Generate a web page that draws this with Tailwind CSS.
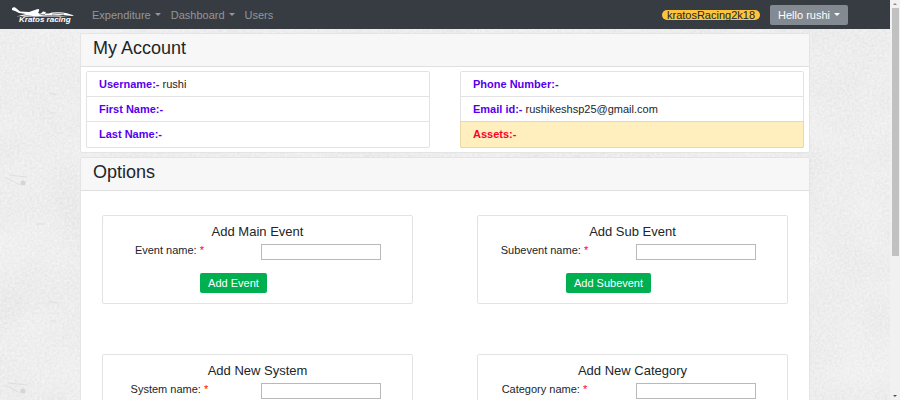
<!DOCTYPE html>
<html lang="en">
<head>
<meta charset="utf-8">
<title>Kratos Racing - My Account</title>
<script src="https://cdn.jsdelivr.net/npm/@tailwindcss/browser@4"></script>
</head>
<body class="flex h-screen overflow-hidden bg-[#ececec] font-['Liberation_Sans',Arial,sans-serif] text-[11px] leading-4 text-[#212529]">
  <div class="relative isolate min-w-0 flex-1 overflow-hidden">
    <!-- Paper texture behind the page -->
    <svg class="absolute inset-0 -z-10 size-full" aria-hidden="true">
      <defs>
        <filter id="grain" x="0" y="0" width="100%" height="100%" color-interpolation-filters="sRGB">
          <feTurbulence type="fractalNoise" baseFrequency="0.4" numOctaves="3" seed="4"/>
          <feColorMatrix values="0.09 0 0 0 0.873  0.09 0 0 0 0.873  0.09 0 0 0 0.873  0 0 0 0 1"/>
        </filter>
        <filter id="cloud" x="0" y="0" width="100%" height="100%" color-interpolation-filters="sRGB">
          <feTurbulence type="fractalNoise" baseFrequency="0.018" numOctaves="2" seed="8"/>
          <feColorMatrix values="0 0 0 0 1  0 0 0 0 1  0 0 0 0 1  0.5 0 0 0 -0.1"/>
        </filter>
        <pattern id="marks" width="330" height="208" patternUnits="userSpaceOnUse" y="-22">
          <g fill="none" stroke="#dedede" stroke-width="1">
            <path d="M5 199 20 207M9 197l18 2M36 38h9M49 115l8 2M50 135h5"/>
          </g>
          <circle cx="23" cy="205" r="2.500" fill="#d5d5d5"/>
        </pattern>
      </defs>
      <rect width="100%" height="100%" filter="url(#grain)"/>
      <rect width="100%" height="100%" filter="url(#cloud)"/>
      <rect width="100%" height="100%" fill="url(#marks)"/>
    </svg>

    <nav class="flex h-[29px] items-center bg-[#373c43] pl-3 pr-[42px] text-[#93969a]">
      <a href="#" aria-label="Kratos racing home" class="mr-[18px]">
        <svg width="62" height="18" viewBox="0 0 62 18">
          <g fill="#fff">
            <path d="M0 2.500C1 .8 3 1 4.500 2.500L8 5.500 17 6 25 3.300Q28 2.500 27 5L26 7 29 7.500 31 5.500 34 6 33 7.500 37 7.500 40 6.500Q49 5.500 55 7.300L62 9.500 60 10 51 9 47 9.500 35 9.500 24 10.200 15 9.500 4 10.500 14 8 7 7 3 5 0 4Z"/>
            <path d="M8 9.800Q30 10.800 58 9.800L48 10.800 13 10.800Z"/>
          </g>
          <path d="M27 7.500Q29 9 33 8.500M40 8.200Q46 7 52 8" fill="none" stroke="#373c43" stroke-width=".6"/>
          <text x="7" y="16" fill="#fff" font-family="Liberation Sans, sans-serif" font-size="8" font-weight="bold" font-style="italic">Kratos racing</text>
        </svg>
      </a>
      <div class="flex items-center gap-[10px]">
        <button type="button" class="flex items-center gap-1">Expenditure
          <svg width="6" height="3" viewBox="0 0 6 3" fill="currentColor"><path d="M0 0h6L3 3z"/></svg></button>
        <button type="button" class="flex items-center gap-1">Dashboard
          <svg width="6" height="3" viewBox="0 0 6 3" fill="currentColor"><path d="M0 0h6L3 3z"/></svg></button>
        <a href="#">Users</a>
      </div>
      <span class="ml-auto rounded-full bg-[#ffc23d] px-[5px] leading-[10px] text-[#212529]">kratosRacing2k18</span>
      <button type="button" class="ml-[10px] flex h-5 items-center gap-1 rounded-xs bg-[#838a91] px-2 text-white">Hello rushi
        <svg width="6" height="3" viewBox="0 0 6 3" fill="currentColor"><path d="M0 0h6L3 3z"/></svg></button>
    </nav>

    <main class="mx-20 mt-1 flex flex-col gap-1">
      <section class="rounded-xs border border-[#e4e4e4] bg-white">
        <h1 class="border-b border-[#dfdfdf] bg-[#f7f7f7] px-3 pb-2 pt-1 text-[18px] leading-5">My Account</h1>
        <div class="grid grid-cols-2 gap-[30px] px-[5px] py-1">
          <ul class="divide-y divide-[#e3e3e3] rounded-xs border border-[#e3e3e3]">
            <li class="h-[25px] px-3 leading-6"><b class="text-[#5600ee]">Username:-</b> rushi</li>
            <li class="h-[25px] px-3 leading-6"><b class="text-[#5600ee]">First Name:-</b></li>
            <li class="h-[25px] px-3 leading-6"><b class="text-[#5600ee]">Last Name:-</b></li>
          </ul>
          <ul class="divide-y divide-[#e3e3e3] rounded-xs border border-[#e3e3e3]">
            <li class="h-[25px] px-3 leading-6"><b class="text-[#5600ee]">Phone Number:-</b></li>
            <li class="h-[25px] px-3 leading-6"><b class="text-[#5600ee]">Email id:-</b> rushikeshsp25@gmail.com</li>
            <li class="-m-px h-[27px] rounded-b-xs border border-[#e8d9a8] bg-[#ffeebe] px-3 leading-6"><b class="text-[#fb0324]">Assets:-</b></li>
          </ul>
        </div>
      </section>

      <section class="rounded-xs border border-[#e4e4e4] bg-white">
        <h2 class="border-b border-[#dfdfdf] bg-[#f7f7f7] px-3 pb-2 pt-1 text-[18px] leading-5">Options</h2>
        <div class="grid grid-cols-2 gap-x-16 gap-y-[50px] px-[21px] py-6">
          <form class="rounded-xs border border-[#e3e3e3] pb-[10px] pt-2">
            <h3 class="text-center text-[13px] leading-4">Add Main Event</h3>
            <div class="mt-1 flex items-start">
              <label for="event" class="w-[43%] text-center leading-3">Event name: <span class="text-[#ff0000]">*</span></label>
              <input id="event" type="text" class="ml-[8%] h-4 w-[39%] border border-[#b9b9b9] bg-white px-1">
            </div>
            <div class="mt-[13px] pr-12">
              <button type="button" class="mx-auto block h-5 rounded-xs bg-[#00b050] px-2 text-white">Add Event</button>
            </div>
          </form>
          <form class="rounded-xs border border-[#e3e3e3] pb-[10px] pt-2">
            <h3 class="text-center text-[13px] leading-4">Add Sub Event</h3>
            <div class="mt-1 flex items-start">
              <label for="subevent" class="w-[43%] text-center leading-3">Subevent name: <span class="text-[#ff0000]">*</span></label>
              <input id="subevent" type="text" class="ml-[8%] h-4 w-[39%] border border-[#b9b9b9] bg-white px-1">
            </div>
            <div class="mt-[13px] pr-12">
              <button type="button" class="mx-auto block h-5 rounded-xs bg-[#00b050] px-2 text-white">Add Subevent</button>
            </div>
          </form>
          <form class="rounded-xs border border-[#e3e3e3] pb-[10px] pt-2">
            <h3 class="text-center text-[13px] leading-4">Add New System</h3>
            <div class="mt-1 flex items-start">
              <label for="system" class="w-[43%] text-center leading-3">System name: <span class="text-[#ff0000]">*</span></label>
              <input id="system" type="text" class="ml-[8%] h-4 w-[39%] border border-[#b9b9b9] bg-white px-1">
            </div>
          </form>
          <form class="rounded-xs border border-[#e3e3e3] pb-[10px] pt-2">
            <h3 class="text-center text-[13px] leading-4">Add New Category</h3>
            <div class="mt-1 flex items-start">
              <label for="category" class="w-[43%] text-center leading-3">Category name: <span class="text-[#ff0000]">*</span></label>
              <input id="category" type="text" class="ml-[8%] h-4 w-[39%] border border-[#b9b9b9] bg-white px-1">
            </div>
          </form>
        </div>
      </section>
    </main>
  </div>

  <!-- Scrollbar -->
  <div class="flex w-[10px] shrink-0 flex-col items-center bg-[#f1f1f1]" aria-hidden="true">
    <svg class="my-[3px] shrink-0" width="4" height="2" viewBox="0 0 4 2" fill="#8a8a8a"><path d="M0 2h4L2 0z"/></svg>
    <div class="h-[62%] w-[7px] bg-[#c1c1c1]"></div>
    <svg class="mb-[3px] mt-auto shrink-0" width="4" height="2" viewBox="0 0 4 2" fill="#505050"><path d="M0 0h4L2 2z"/></svg>
  </div>
</body>
</html>
